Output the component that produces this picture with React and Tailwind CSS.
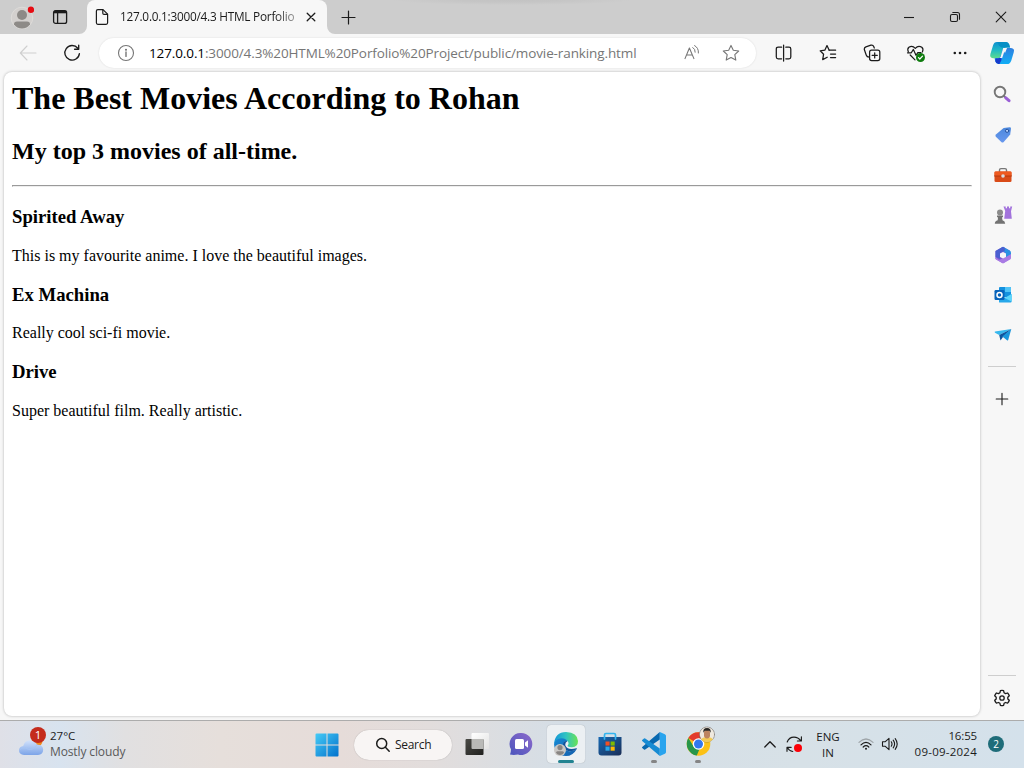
import React from "react";

const UI = "font-['Open_Sans','Noto_Sans',sans-serif]";

function Icon({ w, h = w, children, className = "", stroke = "#1b1b1b", sw = 1.1 }) {
  return (
    <svg
      width={w}
      height={h}
      viewBox={`0 0 ${w} ${h}`}
      fill="none"
      stroke={stroke}
      strokeWidth={sw}
      strokeLinecap="round"
      strokeLinejoin="round"
      className={`shrink-0 ${className}`}
    >
      {children}
    </svg>
  );
}

function Slot({ className = "w-11", children }) {
  return <div className={`flex shrink-0 items-center justify-center ${className}`}>{children}</div>;
}

function TitleBar() {
  return (
    <header className="flex h-[34px] bg-[#cdcdcd] bg-[radial-gradient(ellipse_120px_5px_at_512px_0px,#c3c3c3_0%,#c5c5c5_40%,#cdcdcd_100%)]">
      <Slot className="w-11">
        <Icon w={24} stroke="none" className="mt-px">
          <circle cx="12" cy="12" r="10.8" fill="#d3d0ce" stroke="#dedcda" strokeWidth="1" />
          <circle cx="12" cy="9" r="5" fill="#8d8a87" />
          <path d="M4 18.2Q4 15.6 7 15.6H17Q20 15.6 20 18.2Q17 22.6 12 22.6Q7 22.6 4 18.2Z" fill="#8d8a87" />
          <circle cx="21" cy="3.8" r="3.2" fill="#e60b12" />
        </Icon>
      </Slot>
      <Slot className="w-8">
        <Icon w={16} sw={1.3}>
          <rect x="1.6" y="1.6" width="13" height="12.8" rx="2" />
          <path d="M2 3H14.4" strokeWidth="2.6" strokeLinecap="butt" />
          <path d="M5.6 3V14" />
        </Icon>
      </Slot>
      <div className="w-[3px]" />
      <svg className="h-2 w-2 self-end" viewBox="0 0 8 8"><path d="M8 0V8H0A8 8 0 0 0 8 0Z" fill="#f7f7f7" /></svg>
      <div className="flex w-60 items-center rounded-t-lg bg-[#f7f7f7] pl-2">
        <Icon w={14} h={18} sw={1.2}>
          <path d="M2.8 1.6H8L12.6 6.2V14.8Q12.6 16.3 11.1 16.3H2.8Q1.4 16.3 1.4 14.8V3Q1.4 1.6 2.8 1.6Z" />
          <path d="M7.8 1.8V5.2Q7.8 6.4 9 6.4H12.4" />
        </Icon>
        <div className="ml-[11px] w-[176px] whitespace-nowrap text-[11.8px] tracking-[-0.24px] text-[#1b1b1b] [mask-image:linear-gradient(to_right,black_88%,rgba(0,0,0,0.4))]">
          127.0.0.1:3000/4.3 HTML Porfolio
        </div>
        <Icon w={12} className="ml-[9px]" sw={1.3}><path d="M2.2 2.2L9.8 9.8M9.8 2.2L2.2 9.8" /></Icon>
      </div>
      <svg className="h-2 w-2 self-end" viewBox="0 0 8 8"><path d="M0 0V8H8A8 8 0 0 1 0 0Z" fill="#f7f7f7" /></svg>
      <Slot className="w-[27px]">
        <Icon w={15} sw={1.2}><path d="M7.5 1V14M1 7.5H14" /></Icon>
      </Slot>
      <div className="flex-1" />
      <Slot className="w-[46px]"><Icon w={12}><path d="M1 6.5H11" strokeLinecap="butt" /></Icon></Slot>
      <Slot className="w-[46px]">
        <Icon w={12}>
          <rect x="1.5" y="3.5" width="7" height="7" rx="1.5" />
          <path d="M3.8 1.5H8.5Q10.5 1.5 10.5 3.5V8.2" />
        </Icon>
      </Slot>
      <Slot className="w-[46px]"><Icon w={12}><path d="M1.2 1.2L10.8 10.8M10.8 1.2L1.2 10.8" /></Icon></Slot>
    </header>
  );
}

function Toolbar() {
  return (
    <div className="flex h-[38px] items-center">
      <Slot className="ml-1.5 w-11">
        <Icon w={18} stroke="#cfcfcf"><path d="M1.5 9H17M8 2L1.3 9L8 16" /></Icon>
      </Slot>
      <Slot>
        <Icon w={18} sw={1.35}>
          <path d="M14.8 4.2A7.3 7.3 0 1 0 16.4 9.6" />
          <path d="M15.7 1.2V5.2H11.6" />
        </Icon>
      </Slot>
      <div className="ml-[5px] flex h-[30px] w-[657px] items-center rounded-full bg-white shadow-[0_0_2px_rgba(0,0,0,0.12)]">
        <Icon w={18} className="ml-[18px]" stroke="#767676">
          <circle cx="9" cy="9" r="7.5" />
          <path d="M9 8V12.4" strokeWidth="1.4" />
          <circle cx="9" cy="5.7" r=".5" fill="#767676" />
        </Icon>
        <div className="ml-[14px] flex-1 whitespace-nowrap text-[13.5px] tracking-[-0.115px] text-[#767676]">
          <span className="text-black">127.0.0.1</span>:3000/4.3%20HTML%20Porfolio%20Project/public/movie-ranking.html
        </div>
        <Icon w={18} stroke="#767676" className="mr-[21px]">
          <path d="M2 14.6L6.4 4L10.9 14.6M3.5 11H9.4" />
          <path d="M9.8 3.5Q12.4 5 12.2 8.2M11.6 1.6Q15.8 3.8 15.4 9" strokeWidth="1" />
        </Icon>
        <Icon w={18} stroke="#767676" className="mr-4">
          <path d="M9 1.4L11.3 6.3L16.7 7L12.8 10.7L13.8 16.1L9 13.5L4.2 16.1L5.2 10.7L1.3 7L6.7 6.3Z" />
        </Icon>
      </div>
      <div className="w-1.5" />
      <Slot>
        <Icon w={18} sw={1.25}>
          <path d="M6.6 3.2H3.2Q1.3 3.2 1.3 5V13Q1.3 14.8 3.2 14.8H6.6M10.8 3.2H14Q15.8 3.2 15.8 5V13Q15.8 14.8 14 14.8H10.8M8.6 1V17" />
        </Icon>
      </Slot>
      <Slot>
        <Icon w={18} sw={1.25}>
          <path d="M10.2 6.2H16.6M11.5 10H16.6M11.5 13.5H16.6" />
          <path d="M10.2 6.2L8 1.6L5.8 6.2L1.2 6.8L4.6 10.2L3.7 15.6L8.2 13.2" />
        </Icon>
      </Slot>
      <Slot>
        <Icon w={18} sw={1.25}>
          <path d="M6.4 13.2Q3.9 13.3 3.2 11L1.4 5.8Q.9 3.7 2.9 2.9L7.9 1.2Q10 .7 10.7 2.5L11.3 4" />
          <rect x="6.6" y="6.2" width="10.2" height="10.3" rx="2" />
          <path d="M11.7 8.8V13.9M9.1 11.3H14.3" />
        </Icon>
      </Slot>
      <Slot>
        <Icon w={20} sw={1.2} className="mt-px">
          <path d="M2.4 8Q.9 5 2.9 3.3Q6.3 1 9.3 4.3Q12.3 1 15.8 3.3Q17.8 5 16.4 8M4.2 11L9 15.8" />
          <path d="M1.5 8.8H5.3L7.4 5.4L10 11.3L11.8 8.6H15" />
          <circle cx="14.5" cy="13.5" r="4.5" fill="#107c10" stroke="none" />
          <path d="M12.5 13.7L13.8 15L16.5 12.1" stroke="#fff" />
        </Icon>
      </Slot>
      <Slot>
        <Icon w={16} stroke="none">
          <g fill="#1b1b1b"><circle cx="2.8" cy="8" r="1.3" /><circle cx="8" cy="8" r="1.3" /><circle cx="13.2" cy="8" r="1.3" /></g>
        </Icon>
      </Slot>
      <Slot className="w-10">
        <Icon w={26} stroke="none">
          <defs>
            <linearGradient id="cpa" x1="0" y1="0" x2="0" y2="1"><stop stopColor="#0d8fd0" /><stop offset=".5" stopColor="#20b9c6" /><stop offset="1" stopColor="#5ddc8d" /></linearGradient>
            <linearGradient id="cpb" x1="0" y1="0" x2="0" y2="1"><stop stopColor="#2f7fe0" /><stop offset="1" stopColor="#11aef5" /></linearGradient>
          </defs>
          <path d="M8 2H17Q19.4 2 20.2 4.6L21 7.6H17.8Q15 7.6 14.1 10.4L11.8 18.2H4Q.4 18 1.4 14L4 5.4Q5 2 8 2Z" fill="url(#cpa)" />
          <path d="M8.5 2H17Q19.4 2 20.2 4.6L21 7.6H12.5L10 5.6Z" fill="#078fc5" />
          <path d="M18 8H22Q26 8.4 24.7 12.4L22.3 20.4Q21.2 24 18 24H9.4Q7 24 6.3 21.2L5.5 18.2H8.5Q11 18 11.8 15.4L13.6 9L16 13Z" fill="url(#cpb)" />
          <path d="M6.4 18.3H9Q11.2 18 12 15.4L12.5 20L10.5 24H9.4Q7 24 6.3 21.2Z" fill="#173bcc" />
          <path d="M14.2 8H17.6Q16.2 8.6 15.5 11L13.2 18H10.4Q11.4 17.4 12 15.4Z" fill="#f7f7f7" />
        </Icon>
      </Slot>
    </div>
  );
}

function Movie({ title, text }) {
  return (
    <section>
      <h3 className="mt-[18.72px] text-[18.72px] font-bold leading-[21px]">{title}</h3>
      <p className="mt-[18.72px] text-[16px] leading-[19px]">{text}</p>
    </section>
  );
}

function Page() {
  return (
    <main className="ml-1 h-[644px] w-[976px] shrink-0 rounded-lg bg-white px-2 pt-2 font-['Liberation_Serif',serif] text-black shadow-[0_0_3px_rgba(0,0,0,0.28)]">
      <h1 className="text-[32px] font-bold leading-[36px]">The Best Movies According to Rohan</h1>
      <h2 className="mt-[22.44px] text-[24px] font-bold leading-[27px]">My top 3 movies of all-time.</h2>
      <hr className="mt-[19.5px] h-[2px] border border-b-[#eeeeee] border-l-[#9a9a9a] border-r-[#eeeeee] border-t-[#9a9a9a]" />
      <div className="pt-[0.6px]">
        <Movie title="Spirited Away" text="This is my favourite anime. I love the beautiful images." />
        <Movie title="Ex Machina" text="Really cool sci-fi movie." />
        <Movie title="Drive" text="Super beautiful film. Really artistic." />
      </div>
    </main>
  );
}

function Sidebar() {
  const slot = "h-10 w-11 pl-px";
  return (
    <aside className="flex w-11 flex-col items-center pt-0.5">
      <Slot className="mb-px h-10 w-11">
        <Icon w={18} stroke="#767676" sw={1.9}>
          <circle cx="7" cy="7" r="5.3" />
          <path d="M11 11L12.6 12.6" />
          <path d="M12.8 12.8L16 15.7" stroke="#9a5fd6" strokeWidth="3" />
        </Icon>
      </Slot>
      <Slot className={slot}>
        <Icon w={18} stroke="none">
          <defs><linearGradient id="tag" x1="0" y1="0" x2="0" y2="1"><stop stopColor="#4c88dd" /><stop offset="1" stopColor="#6898ee" /></linearGradient></defs>
          <path d="M9.6 2L15.7 1.2Q17 1.2 17 2.5L16.2 8.4L9.7 16Q8.5 17 7.3 16L1.9 10.8Q.9 9.7 1.9 8.5Z" fill="url(#tag)" />
          <circle cx="13.1" cy="4.8" r="1.6" fill="#b9d4ff" stroke="#234f9c" strokeWidth="1" />
        </Icon>
      </Slot>
      <Slot className={slot}>
        <Icon w={20} h={18} stroke="none">
          <path d="M6.5 6V4Q6.5 2.6 8 2.6H12Q13.5 2.6 13.5 4V6" stroke="#777" strokeWidth="1.4" />
          <rect x="1.5" y="5.6" width="17" height="10.5" rx="1.3" fill="#d94b18" />
          <path d="M1.5 6.6Q1.5 5.4 2.8 5.4H17.2Q18.5 5.4 18.5 6.6V10H1.5Z" fill="#ee5a20" />
          <path d="M1.5 10H18.5" stroke="#a7340c" strokeWidth=".8" />
          <circle cx="10" cy="10" r="1.8" fill="#d9dde0" />
        </Icon>
      </Slot>
      <Slot className={slot}>
        <Icon w={20} stroke="none">
          <path d="M10.5 1.5H12.7V3.3H14V1.5H16V3.3H17.2V1.5H19.2L18 6.2L18.8 13.8H11.2L12.2 6Z" fill="#a273dc" />
          <circle cx="7" cy="7.5" r="3" fill="#8b8b8b" />
          <path d="M4 10.5H10V12L9 12.5L9.5 15.2Q12.2 16 12.2 18.7H1.8Q1.8 16 4.7 15.2L5 12.5L4 12Z" fill="#737373" />
        </Icon>
      </Slot>
      <Slot className={slot}>
        <Icon w={18} stroke="none">
          <path d="M9 .8L16 4.8V13L9 17.2L1.5 13V5Z" fill="#805bd5" />
          <path d="M9 .8L16 4.8Q17 5.4 17 7V10L11.7 12V7L6 3Z" fill="#2b93e3" />
          <path d="M1.5 5L8 1.2Q11 .4 11 4.4L6.2 7V13L1.5 11Z" fill="#4a5fd0" />
          <path d="M1.5 11L5 14L12 11L17 8V12Q17 13 16 13.6L10 16.9Q9 17.4 8 16.9L2 13.4Q1 12.6 1.5 11Z" fill="#a97be4" />
          <path d="M9 6L12 7.6V11L9 12.5L6 11V7.6Z" fill="#f7f7f7" />
        </Icon>
      </Slot>
      <Slot className={slot}>
        <Icon w={18} stroke="none">
          <rect x="5" y="1" width="12" height="10" rx="1" fill="#1491df" />
          <path d="M11 1H16Q17 1 17 2V6H11Z" fill="#50c4f7" />
          <path d="M5 16V9L11 12L17.6 8V15.5Q17.6 16.5 16.6 16.5H6Q5 16.5 5 16Z" fill="#28a8ea" />
          <path d="M17.6 8V15.5L10.6 12Z" fill="#5cd6fb" />
          <rect x=".5" y="4" width="10" height="10" rx="1.2" fill="#0764bb" />
          <circle cx="5.5" cy="9" r="2.5" stroke="#fff" strokeWidth="1.5" />
        </Icon>
      </Slot>
      <Slot className={slot}>
        <Icon w={18} stroke="none">
          <path d="M17.3 3L1 5.5Q.2 6 1 6.7L5.2 9Z" fill="#36b8ee" />
          <path d="M17.3 3L5.2 9L6.5 14.4L9 11Z" fill="#11559d" />
          <path d="M17.3 3L8.3 10.6L13.3 14.4Q14 14.7 14.2 14Z" fill="#1996dc" />
        </Icon>
      </Slot>
      <div className="mt-[11px] h-px w-7 shrink-0 bg-[#cecece]" />
      <Slot className="h-[63px] w-11"><Icon w={14} className="-ml-px"><path d="M7 1.2V12.8M1.2 7H12.8" /></Icon></Slot>
      <div className="flex-1" />
      <div className="h-px w-7 shrink-0 bg-[#cecece]" />
      <Slot className="h-11 w-11">
        <Icon w={18} sw={1.3}>
          <path d="M7.4 1.7Q9 1.2 10.6 1.7L11.1 3.8L12.5 4.6L14.6 4Q15.8 5.2 16.3 6.8L14.8 8.3V9.9L16.3 11.3Q15.8 12.9 14.6 14.1L12.5 13.5L11.1 14.3L10.6 16.4Q9 16.8 7.4 16.4L6.9 14.3L5.5 13.5L3.4 14.1Q2.2 12.9 1.7 11.3L3.2 9.9V8.3L1.7 6.8Q2.2 5.2 3.4 4L5.5 4.6L6.9 3.8Z" />
          <circle cx="9" cy="9" r="2.2" />
        </Icon>
      </Slot>
    </aside>
  );
}

function Taskbar() {
  return (
    <footer className="flex h-12 items-center border-t border-[#acacac] bg-[linear-gradient(90deg,#dfe0e7_0px,#d8e3ef_60px,#e1e0e1_125px,#e6dfdb_220px,#e6dcd9_340px,#e2dddc_430px,#d5dee6_560px,#d7e1e7_800px,#d4e1eb_1024px)] text-[12px] leading-4 text-[#1b1b1b]">
      <div className="flex w-[308px] items-center pl-[18px]">
        <Icon w={30} h={32} stroke="none" className="-mt-[7px]">
          <defs><linearGradient id="cloud" x1="0" y1="0" x2="0" y2="1"><stop stopColor="#d2e2fb" /><stop offset="1" stopColor="#7ca4e8" /></linearGradient></defs>
          <circle cx="19" cy="16" r="5.5" fill="#f08a1c" />
          <path d="M6 30Q1 29.5 1 25.2Q1.3 21.6 5.2 21Q6.5 15.5 12 15.2Q17.5 15.2 19 19.8Q24.8 19.5 25.2 24.7Q25 29.7 20 30Z" fill="url(#cloud)" />
          <path d="M1.5 25Q5 21 9.5 24Q15 26 19 19.8" stroke="#a5c4f4" strokeWidth=".8" />
          <circle cx="20" cy="10" r="8" fill="#c42b1c" />
          <text x="20" y="14.2" textAnchor="middle" fontSize="11.5" fill="#fff" fontFamily="Open Sans">1</text>
        </Icon>
        <div className="-mt-[2px] ml-[2px] whitespace-nowrap">
          <div className="text-[11.5px] tracking-[0px]">27°C</div>
          <div className="text-[12px] tracking-[-0.12px] text-[#595959]">Mostly cloudy</div>
        </div>
      </div>
      <Slot className="w-10">
        <Icon w={24} stroke="none" className="-ml-[2px]">
          <defs><linearGradient id="win" x1="0" y1="0" x2="24" y2="24" gradientUnits="userSpaceOnUse"><stop stopColor="#48cdf7" /><stop offset="1" stopColor="#006fcb" /></linearGradient></defs>
          <path d="M1.5 .5H11.5V11.5H.5V1.5Q.5 .5 1.5 .5ZM12.5 .5H22.5Q23.5 .5 23.5 1.5V11.5H12.5ZM.5 12.5H11.5V23.5H1.5Q.5 23.5 .5 22.5ZM12.5 12.5H23.5V22.5Q23.5 23.5 22.5 23.5H12.5Z" fill="url(#win)" />
        </Icon>
      </Slot>
      <div className="ml-[6px] flex h-[30px] w-[98px] items-center rounded-full bg-[#f8f5f4] pl-[21px] shadow-[0_0_1px_rgba(0,0,0,0.3)]">
        <Icon w={16} sw={1.5}><circle cx="6.7" cy="6.5" r="5" /><path d="M10.4 10.3L14.2 14.2" /></Icon>
        <span className="ml-1 text-[12px] tracking-[-0.3px]">Search</span>
      </div>
      <Slot className="ml-[3px] w-[44px]">
        <Icon w={24} stroke="none" className="-mt-px">
          <defs>
            <linearGradient id="tvb" x1="0" y1="0" x2="1" y2="1"><stop stopColor="#4a4a46" /><stop offset="1" stopColor="#20201e" /></linearGradient>
            <linearGradient id="tvw" x1="0" y1="0" x2="1" y2="1"><stop stopColor="#fff" /><stop offset="1" stopColor="#e3e3e3" /></linearGradient>
          </defs>
          <rect x="6.5" y="1" width="17.5" height="16" rx="1" fill="url(#tvw)" />
          <rect x="0.5" y="7" width="18" height="16" rx="1" fill="url(#tvb)" />
          <path d="M6.5 7H18.5V17H7.5Q6.5 17 6.5 16Z" fill="#b9b9b7" />
        </Icon>
      </Slot>
      <Slot className="w-[44px]">
        <Icon w={24} stroke="none" className="-mt-px">
          <defs><linearGradient id="chat" x1="1" y1="0" x2="0" y2="1"><stop stopColor="#8d6acb" /><stop offset="1" stopColor="#4b55bd" /></linearGradient></defs>
          <path d="M12.3 1A11 11 0 1 1 9 22.5Q5 23.4 1 22.6Q2 20.2 2 17.3A11 11 0 0 1 12.3 1Z" fill="url(#chat)" />
          <rect x="6" y="7" width="9" height="10" rx="1.5" fill="#fff" />
          <path d="M16 10.5L19 8.2V15.8L16 13.6Z" fill="#fff" />
        </Icon>
      </Slot>
      <div className="-mt-px ml-1 flex h-[38px] w-[38px] flex-col items-center rounded bg-[#ecf0f3] pt-[5px] shadow-[0_0_1px_rgba(0,0,0,0.3)]">
        <Icon w={26} h={28} stroke="none">
          <defs>
            <linearGradient id="edg" x1="0" y1="0" x2="1" y2="0"><stop stopColor="#1495d8" /><stop offset=".5" stopColor="#31c4c2" /><stop offset="1" stopColor="#6ae353" /></linearGradient>
            <linearGradient id="edb" x1="0" y1="0" x2="1" y2="1"><stop stopColor="#1689d4" /><stop offset="1" stopColor="#145eac" /></linearGradient>
          </defs>
          <path d="M1 14Q2 2.2 13 2Q24.5 2.6 25 11Q25 17 19 17.3Q14.5 17.4 14.6 15.6Q16.6 13.5 14.5 11Q8 6 1 14Z" fill="url(#edg)" />
          <path d="M1 14Q3 8.3 8.3 8.2Q13 8.4 14.5 11Q11.5 10.5 10.2 13.5Q9 20 16 21.2Q20 21.5 23.6 19.2Q20 26 13 26Q2 25.4 1 14Z" fill="url(#edb)" />
          <path d="M14.5 11Q9.8 10.4 9.8 15.5Q10.5 20.6 16 21.2Q20.5 21.6 23.6 19.2Q24.4 18 23.4 18.2Q14 20.5 12.2 15Q12 12.4 14.5 11Z" fill="#11539b" />
          <circle cx="7" cy="20" r="6" fill="#c9c7c5" />
          <circle cx="7" cy="17.6" r="2.6" fill="#888583" />
          <path d="M3 22.8Q3 21.2 4.5 21.2H9.5Q11 21.2 11 22.8Q9.5 25 7 25Q4.5 25 3 22.8Z" fill="#888583" />
        </Icon>
        <div className="mt-[2px] h-[3px] w-4 rounded-full bg-[#228391]" />
      </div>
      <Slot className="ml-[3px] w-[44px]">
        <Icon w={24} h={26} stroke="none" className="-mt-px">
          <defs><linearGradient id="sto" x1="0" y1="0" x2="1" y2="1"><stop stopColor="#1669b4" /><stop offset="1" stopColor="#1a2d55" /></linearGradient></defs>
          <path d="M.5 6H23.5V21.5Q23.5 24.5 20.5 24.5H3.5Q.5 24.5 .5 21.5Z" fill="url(#sto)" />
          <path d="M6.5 8V4Q6.5 2.5 8 2.5H16Q17.5 2.5 17.5 4V8" stroke="#33b4ee" strokeWidth="1.7" />
          <path d="M7.5 10.5H11.6V14.6H7.5Z" fill="#f25022" /><path d="M12.6 10.5H16.7V14.6H12.6Z" fill="#7fba00" />
          <path d="M7.5 15.6H11.6V19.7H7.5Z" fill="#28a8ea" /><path d="M12.6 15.6H16.7V19.7H12.6Z" fill="#ffb900" />
        </Icon>
      </Slot>
      <div className="-mt-px flex h-[38px] w-[44px] flex-col items-center pt-[6px]">
        <Icon w={26} stroke="none">
          <path d="M18.8 1V8.5L4.2 18.6Q3.6 19 3 18.5L1.2 17Q.7 16.4 1.2 15.9Z" fill="#0869b0" />
          <path d="M1.2 9L3 7.5Q3.6 7 4.2 7.4L18.8 17.6V25L1.2 10.1Q.7 9.6 1.2 9Z" fill="#168bd3" />
          <path d="M18.8 1L23.9 3.2Q25 3.7 25 5V21Q25 22.3 23.9 22.8L18.8 25Z" fill="#29a4ee" />
        </Icon>
        <div className="mt-[3px] h-[3px] w-1.5 rounded-full bg-[#858585]" />
      </div>
      <div className="-mt-px flex h-[38px] w-[44px] flex-col items-center pt-[1px]">
        <Icon w={30} h={30} stroke="none" className="ml-[3px]">
          <circle cx="13.5" cy="18" r="11.8" fill="#fbc116" />
          <path d="M13.5 18L3.3 12.1A11.8 11.8 0 0 1 24 12.5H13.5Z" fill="#e33b2e" />
          <path d="M3.3 12.1L9 21L14.5 23L11.8 29.6A11.8 11.8 0 0 1 3.3 12.1Z" fill="#27964a" />
          <circle cx="13.5" cy="18" r="5.8" fill="#fff" />
          <circle cx="13.5" cy="18" r="4.5" fill="#3178ed" />
          <circle cx="22" cy="8.5" r="7.5" fill="#efe9df" stroke="#69635e" strokeWidth=".6" strokeDasharray="1.5 1" />
          <path d="M16 13.5Q18 10.8 22 11.5Q26 10.8 28 13.5Q25.5 16 22 16Q18 16 16 13.5Z" fill="#f2ca55" />
          <rect x="19" y="4" width="6" height="8.4" rx="2.8" fill="#bd8460" />
          <path d="M18.4 6.8Q17.6 2 22 2Q26.4 2 25.6 6.8L24.4 4.8H19.8Z" fill="#292725" />
        </Icon>
        <div className="mt-[4px] h-[3px] w-1.5 rounded-full bg-[#858585]" />
      </div>
      <div className="flex-1" />
      <Slot className="w-6"><Icon w={14} sw={1.3} className="-mt-[2px]"><path d="M1.8 10L7 4.8L12.2 10" /></Icon></Slot>
      <Slot className="w-6">
        <Icon w={18} sw={1.15} className="-mt-px">
          <path d="M2.2 7Q4 2.1 9 2.1Q13 2.1 16 5.8M16.4 1.8V6H12.4" />
          <path d="M6.2 12.3H2V16.3M2.2 12.5Q4 15.8 7.8 16.5" />
          <circle cx="13" cy="13" r="4" fill="#fb0007" stroke="none" />
        </Icon>
      </Slot>
      <div className="w-[44px] text-center text-[11.5px] tracking-[0.05px]"><div>ENG</div><div>IN</div></div>
      <Slot className="ml-1 w-6">
        <Icon w={16} h={14} sw={1.2} className="-mt-[2px]">
          <path d="M1 5.4Q8 -1.4 15 5.4" stroke="#9fa5a9" />
          <path d="M3 7.8Q8 2.8 13 7.8M5.2 10Q8 7.4 10.8 10" />
          <circle cx="8" cy="11.7" r="1" fill="#1b1b1b" stroke="none" />
        </Icon>
      </Slot>
      <Slot className="w-6">
        <Icon w={18} h={16} className="-mt-[2px]">
          <path d="M1.5 5.7H4.3L8 2.3V13.7L4.3 10.3H1.5Z" />
          <path d="M10.3 5.8Q11.7 8 10.3 10.2M12.2 4.2Q15 8 12.2 11.8M14.2 2.7Q18.2 8 14.2 13.3" />
        </Icon>
      </Slot>
      <div className="-mt-[2px] w-[75px] text-right text-[11.5px]">
        <div className="tracking-[-0.15px]">16:55</div>
        <div className="whitespace-nowrap tracking-[0.24px]">09-09-2024</div>
      </div>
      <div className="-mt-[2px] ml-[11px] mr-5 flex h-4 w-4 shrink-0 items-center justify-center rounded-full bg-[#1e6c79] text-[10px] text-white">2</div>
    </footer>
  );
}

export default function App() {
  return (
    <div className={`flex h-[768px] w-[1024px] flex-col overflow-hidden bg-[#f7f7f7] ${UI}`}>
      <TitleBar />
      <Toolbar />
      <div className="flex h-[648px]">
        <Page />
        <Sidebar />
      </div>
      <Taskbar />
    </div>
  );
}
